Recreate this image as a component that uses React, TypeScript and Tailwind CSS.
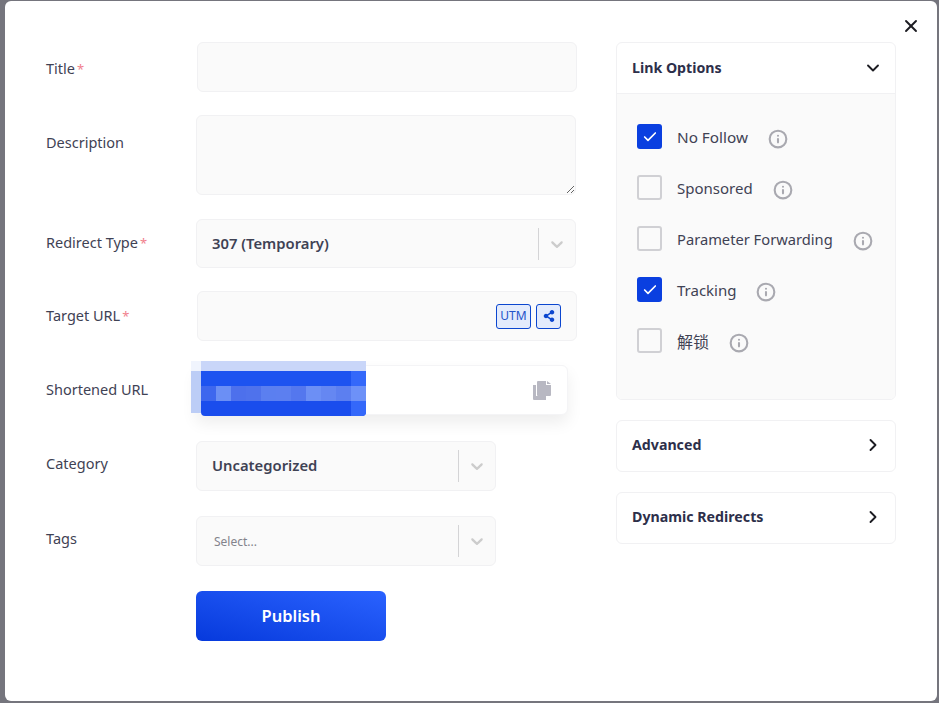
import { ChevronDown, ChevronRight, Check, Info, X } from 'lucide-react';
import { FaShareAlt } from 'react-icons/fa';

const labelClass = 'w-[150px] flex-shrink-0 text-[14.5px] text-[#3f4254]';
const fieldClass = 'bg-[#fafafa] border border-[#f1f1f3] rounded-md';

function Req() {
  return <span className="ml-0.5 text-[13px] text-[#f1808d]">*</span>;
}

function SelectArrow() {
  return (
    <svg viewBox="0 0 20 20" className="size-5 fill-[#cccccc]">
      <path d="M4.516 7.548c0.436-0.446 1.043-0.481 1.576 0l3.908 3.747 3.908-3.747c0.533-0.481 1.141-0.446 1.576 0 0.436 0.445 0.408 1.197 0 1.615-0.406 0.418-4.695 4.502-4.695 4.502-0.217 0.223-0.502 0.335-0.789 0.335s-0.572-0.112-0.789-0.335c0 0-4.287-4.084-4.695-4.502s-0.436-1.17 0-1.615z" />
    </svg>
  );
}

function SelectBox({ value, placeholder, className }: { value?: string; placeholder?: string; className: string }) {
  return (
    <div className={`${className} flex items-center ${fieldClass}`}>
      <div className="flex-1 pl-[15px] pb-0.5">
        {value ? (
          <span className="text-[14.8px] font-semibold text-[#3f4254]">{value}</span>
        ) : (
          <span className="pl-0.5 text-xs text-[#83838c]">{placeholder}</span>
        )}
      </div>
      <div className="w-px h-8 bg-[#d4d4d6]"></div>
      <div className="w-[36px] flex justify-center">
        <SelectArrow />
      </div>
    </div>
  );
}

function CopyIcon() {
  return (
    <svg viewBox="0 0 18 19" className="w-[18px] h-[19px] fill-[#b8b8c2]">
      <path d="M0 4h3v11h10v4H1a1 1 0 0 1-1-1z" />
      <path d="M4 1a1 1 0 0 1 1-1h8v4h5v10a1 1 0 0 1-1 1H5a1 1 0 0 1-1-1z" />
      <path d="M14 0l4 3h-4z" />
    </svg>
  );
}

const mosaicRow = ['#3e67ee', '#6b8ff5', '#4d70ec', '#4f72ec', '#5b7ff0', '#5c7ff0', '#5477ee', '#6c8ff5', '#6587f2', '#5c7ff0', '#6d91f8'];

function Mosaic() {
  return (
    <div className="absolute left-[-6px] top-[-5px] w-[175px] h-[55px] flex">
      <div className="w-[10px] flex flex-col">
        <div className="h-[10px] bg-[#f0f4fd]"></div>
        <div className="h-[42px] bg-[#bccdf6]"></div>
      </div>
      <div className="flex-1 flex flex-col">
        <div className="h-[10px] bg-[#c9d6f9]"></div>
        <div className="h-[15px] bg-[#1d53f0] flex justify-end">
          <div className="w-[15px] bg-[#3468fa]"></div>
        </div>
        <div className="h-[15px] flex">
          {mosaicRow.map((c, i) => (
            <div key={i} className="w-[15px]" style={{ backgroundColor: c }}></div>
          ))}
        </div>
        <div className="h-[15px] bg-[#1a4ded] rounded-b-sm flex justify-end">
          <div className="w-[15px] bg-[#3468fa] rounded-br-sm"></div>
        </div>
      </div>
    </div>
  );
}

const options = [
  { name: 'No Follow', on: true, text: 'text-[15.3px]' },
  { name: 'Sponsored', on: false, text: 'text-[15px]' },
  { name: 'Parameter Forwarding', on: false, text: 'text-[14.7px]' },
  { name: 'Tracking', on: true, text: 'text-[15px]' },
  { name: '解锁', on: false, text: 'text-[16px]' },
];

function Collapsed({ title }: { title: string }) {
  return (
    <div className="h-[52px] pb-0.5 pl-[15px] pr-[12px] flex items-center justify-between border border-[#f1f1f3] rounded-md">
      <span className="text-[14.2px] font-bold text-[#2d2f4a]">{title}</span>
      <ChevronRight className="size-5 text-[#1c1c22]" strokeWidth={2.25} />
    </div>
  );
}

export default function App() {
  return (
    <div className="h-[703px] bg-[#75757d] pt-px pl-[5px] pr-[2px] overflow-hidden font-['Noto_Sans','Noto_Sans_CJK_SC',sans-serif]">
      <div className="relative h-[700px] bg-white rounded-md pl-[41px] pt-[41px] flex">
        <X className="absolute right-[16px] top-[15px] size-5 text-[#1c1c22]" strokeWidth={2.25} />

        {/* Form */}
        <div className="w-[570px] flex-shrink-0">
          <div className="flex items-center">
            <div className={`${labelClass} pt-1`}>
              Title
              <Req />
            </div>
            <input className={`ml-px w-[380px] h-[50px] ${fieldClass}`} />
          </div>

          <div className="flex mt-[23px]">
            <div className={`${labelClass} pt-[17px]`}>Description</div>
            <textarea className={`w-[380px] h-[80px] ${fieldClass}`}></textarea>
          </div>

          <div className="flex items-center mt-[24px]">
            <div className={`${labelClass} pb-0.5`}>
              Redirect Type
              <Req />
            </div>
            <SelectBox value="307 (Temporary)" className="w-[380px] h-[49px]" />
          </div>

          <div className="flex items-center mt-[23px]">
            <div className={labelClass}>
              Target URL
              <Req />
            </div>
            <div className={`ml-px w-[380px] h-[50px] flex items-center justify-end gap-[5px] pr-[15px] ${fieldClass}`}>
              <div className="w-[35px] h-[25px] flex items-center justify-center bg-[#e3ebfc] border border-[#0b46cf] rounded-[3px] text-xs text-[#2453c9]">
                UTM
              </div>
              <div className="w-[25px] h-[25px] flex items-center justify-center bg-[#e3ebfc] border border-[#0b46cf] rounded-[3px] text-[#0b46cf]">
                <FaShareAlt className="size-3" />
              </div>
            </div>
          </div>

          <div className="flex items-center mt-[24px]">
            <div className={labelClass}>Shortened URL</div>
            <div className="relative w-[372px] h-[50px] flex items-center justify-end pr-4 bg-white border border-[#f4f4f6] rounded-md shadow-[0_8px_16px_rgba(0,0,0,0.07)]">
              <Mosaic />
              <CopyIcon />
            </div>
          </div>

          <div className="flex items-center mt-[26px]">
            <div className={`${labelClass} pb-1`}>Category</div>
            <SelectBox value="Uncategorized" className="w-[300px] h-[50px]" />
          </div>

          <div className="flex items-center mt-[25px]">
            <div className={`${labelClass} pb-1`}>Tags</div>
            <SelectBox placeholder="Select..." className="w-[300px] h-[50px]" />
          </div>

          <button className="block ml-[150px] mt-[25px] w-[190px] h-[50px] rounded-md bg-linear-to-tr from-[#0639dc] to-[#2a62ff] text-[16.5px] font-semibold text-white">
            Publish
          </button>
        </div>

        {/* Side panels */}
        <div className="w-[280px]">
          <div className="h-[358px] border border-[#f1f1f3] rounded-md flex flex-col overflow-hidden">
            <div className="h-[51px] flex-shrink-0 pl-[15px] pr-[12px] flex items-center justify-between border-b border-[#f1f1f3]">
              <span className="text-[14.2px] font-bold text-[#2d2f4a]">Link Options</span>
              <ChevronDown className="size-5 text-[#1c1c22]" strokeWidth={2.25} />
            </div>
            <div className="flex-1 bg-[#fafafa] pl-5 pt-[30px] flex flex-col gap-[26px]">
              {options.map((o) => (
                <div key={o.name} className="h-[25px] flex items-center">
                  {o.on ? (
                    <div className="size-[25px] rounded-[3px] bg-[#0a3fe0] flex items-center justify-center">
                      <Check className="size-4 text-white" strokeWidth={2.5} />
                    </div>
                  ) : (
                    <div className="size-[25px] rounded-[3px] border-2 border-[#d0d0d4]"></div>
                  )}
                  <span className={`ml-[15px] mt-0.5 text-[#3f4254] ${o.text}`}>{o.name}</span>
                  <Info className="ml-5 mt-1 size-[20px] text-[#a9a9b0]" strokeWidth={2.5} />
                </div>
              ))}
            </div>
          </div>
          <div className="mt-5">
            <Collapsed title="Advanced" />
          </div>
          <div className="mt-5">
            <Collapsed title="Dynamic Redirects" />
          </div>
        </div>
      </div>
    </div>
  );
}
